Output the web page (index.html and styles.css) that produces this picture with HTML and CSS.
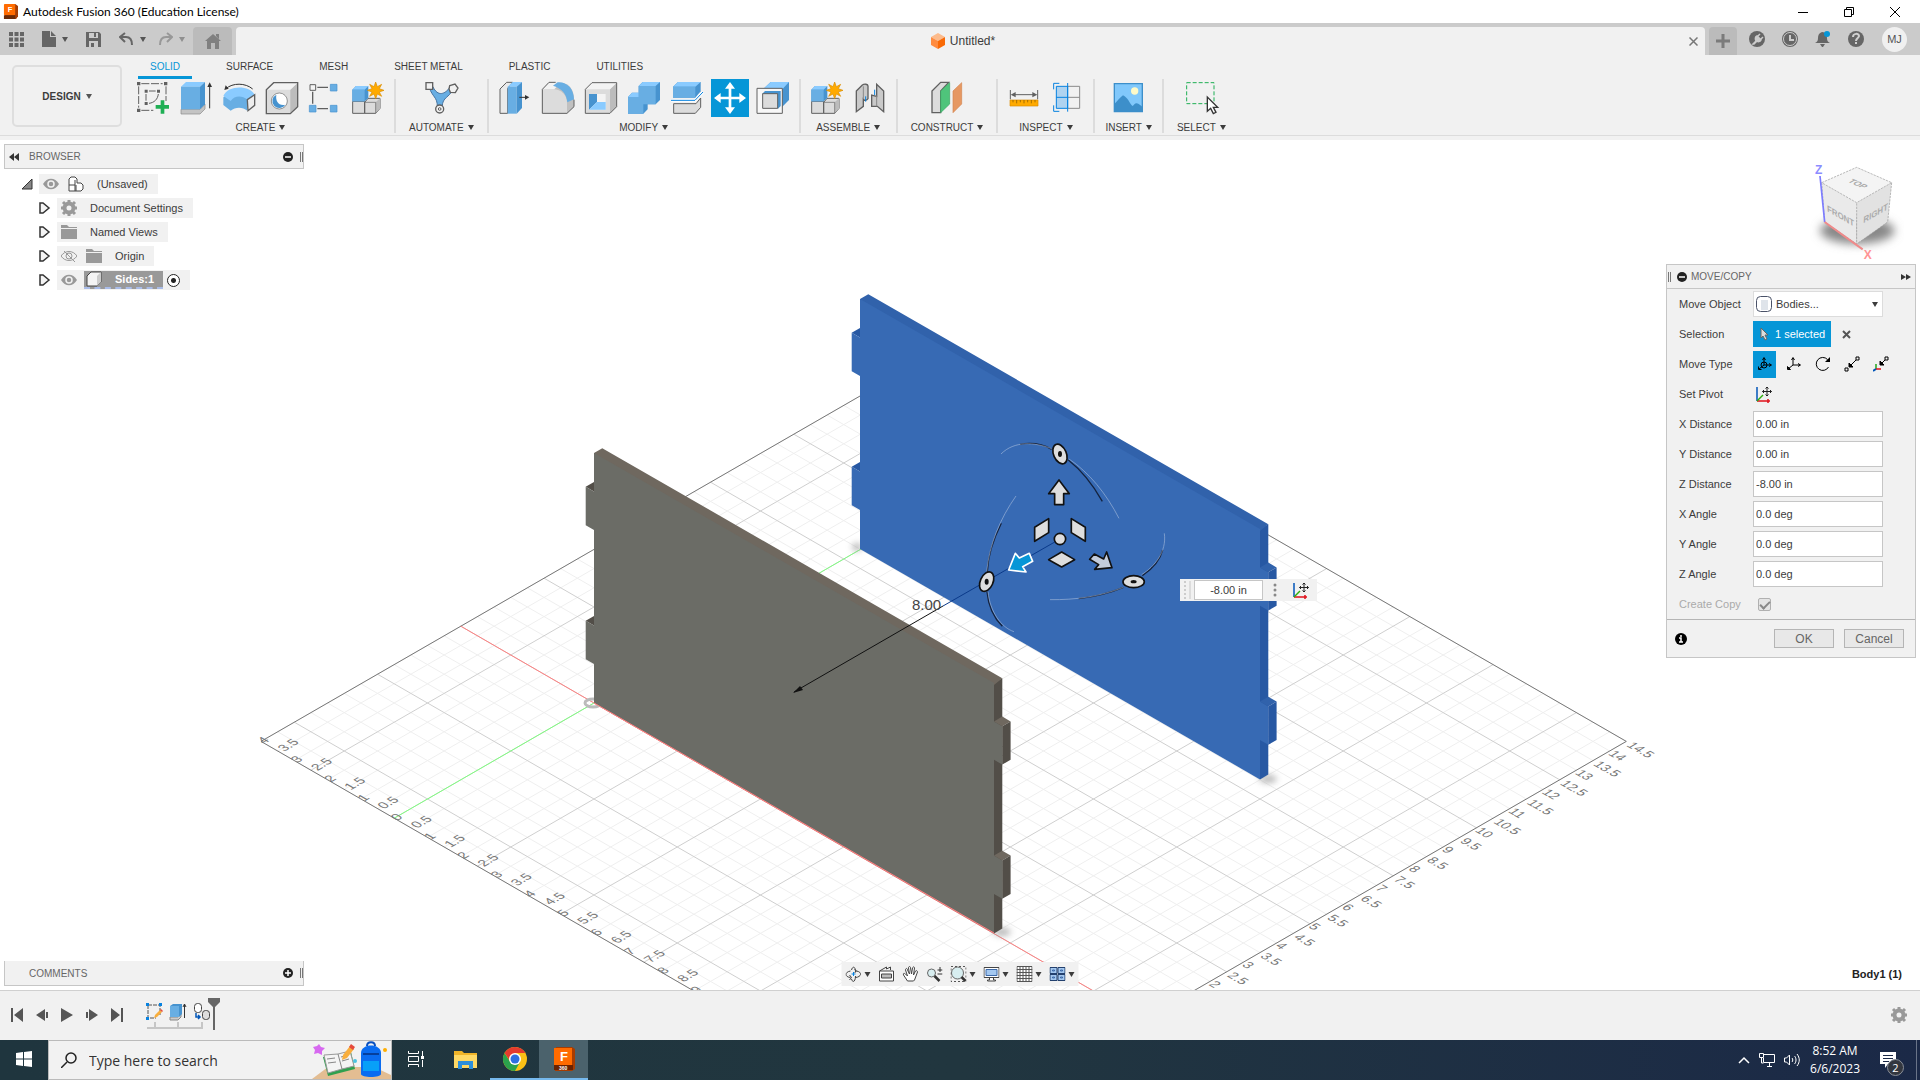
FILE: index.html
```
<!DOCTYPE html>
<html lang="en">
<head>
    <meta charset="UTF-8">
    <meta name="viewport" content="width=device-width,initial-scale=1">
    <title>Autodesk Fusion 360 (Education License)</title>
    <link rel="stylesheet" href="styles.css">
</head>
<body>
    <header class="titlebar">
        <svg class="app-logo" viewBox="0 0 16 18">
            <path d="M2 1h11l3 2v11l-2 3H2z" fill="#a33d05"/>
            <rect x="1" y="1" width="12" height="12" rx="1" fill="#ff6b00"/>
            <rect x="1" y="13" width="12" height="4" fill="#6b2a07"/>
            <text x="5" y="10" class="logo-letter">F</text>
        </svg>
        <span class="title">Autodesk Fusion 360 (Education License)</span>
        <div class="window-buttons">
            <button aria-label="Minimize"><svg viewBox="0 0 10 10"><path d="M0 5.500h10" stroke="#000"/></svg></button>
            <button aria-label="Restore"><svg viewBox="0 0 10 10" fill="none" stroke="#000"><path d="M.5 2.500h7v7h-7zM2.500 2.500v-2h7v7h-2"/></svg></button>
            <button aria-label="Close"><svg viewBox="0 0 10 10"><path d="M0 0l10 10M10 0L0 10" stroke="#000"/></svg></button>
        </div>
    </header>

    <nav class="tabbar">
        <div class="quick-access">
            <button class="qa" aria-label="Data panel"><svg width="15" height="15" viewBox="0 0 15 15" fill="#666"><path d="M0 0h4v4H0zM5.500 0h4v4h-4zM11 0h4v4h-4zM0 5.500h4v4H0zM5.500 5.500h4v4h-4zM11 5.500h4v4h-4zM0 11h4v4H0zM5.500 11h4v4h-4zM11 11h4v4h-4z"/></svg></button>
            <button class="qa" aria-label="File"><svg width="14" height="16" viewBox="0 0 14 16" fill="#666"><path d="M0 0h8v6h6v10H0zM9 0l5 5H9z"/></svg><i class="caret"></i></button>
            <button class="qa" aria-label="Save"><svg width="15" height="15" viewBox="0 0 15 15"><path d="M0 0h13l2 2v13H0z" fill="#666"/><path d="M3 1h9v5H3zM3 9h9v6H3z" fill="#ccc"/><path d="M8 1h2v4H8zM5 11h3v4H5z" fill="#666"/></svg></button>
            <button class="qa" aria-label="Undo"><svg width="15" height="14" viewBox="0 0 15 14" fill="none" stroke="#666" stroke-width="2"><path d="M6 1L1 5l5 5M1 5h6c4 0 6 2 6 8"/></svg><i class="caret"></i></button>
            <button class="qa dim" aria-label="Redo"><svg width="15" height="14" viewBox="0 0 15 14" fill="none" stroke="#666" stroke-width="2"><path d="M9 1l5 4-5 5M14 5H8c-4 0-6 2-6 8"/></svg><i class="caret"></i></button>
        </div>
        <button class="home" aria-label="Home"><svg width="16" height="15" viewBox="0 0 16 15" fill="#808080"><path d="M8 0l8 7h-2v8h-4V9H6v6H2V7H0zM11 0h3v5l-3-3z"/></svg></button>
        <div class="document-tab">
            <span class="document-name">
                <svg width="14" height="16" viewBox="0 0 14 16"><path d="M7 0l7 4-7 4-7-4z" fill="#fcbb8c"/><path d="M0 4l7 4v8l-7-4z" fill="#ff8c40"/><path d="M14 4L7 8v8l7-4z" fill="#f96a07"/></svg>
                Untitled*
            </span>
            <button class="close-tab" aria-label="Close document"><svg width="9" height="9" viewBox="0 0 9 9"><path d="M.5.5l8 8M8.500.5l-8 8" stroke="#777" stroke-width="1.500"/></svg></button>
        </div>
        <button class="new-tab" aria-label="New design"><svg width="14" height="14" viewBox="0 0 14 14"><path d="M7 0v14M0 7h14" stroke="#7b7b7b" stroke-width="3"/></svg></button>
        <div class="account">
            <button aria-label="Extensions"><svg viewBox="0 0 16 16"><circle cx="8" cy="8" r="8" fill="#666"/><path d="M4 13l3-3c-1-2-1-4 1-5l4 4c-1 2-3 2-4 1l-3 3zM9 5l2-2M12 8l2-2" fill="#ccc" stroke="#ccc" stroke-width="1.500"/></svg></button>
            <button aria-label="Job status"><svg viewBox="0 0 16 16"><circle cx="8" cy="8" r="7" fill="#666" stroke="#666" stroke-width="2"/><circle cx="8" cy="8" r="6.500" fill="none" stroke="#ccc"/><path d="M8 4v5h4" fill="none" stroke="#ccc" stroke-width="2"/></svg></button>
            <button aria-label="Notifications"><svg viewBox="0 0 16 16"><path d="M7 1c4 0 5 3 5 6s1 4 3 5H0c2-1 3-2 3-5s1-5 4-6zM5 13h5l-2 3H7z" fill="#666"/><circle cx="12" cy="3" r="3" fill="#0696d7"/></svg></button>
            <button aria-label="Help"><svg viewBox="0 0 16 16"><circle cx="8" cy="8" r="8" fill="#666"/><path d="M5 6c0-4 6-4 6-1 0 2-3 2-3 5M8 11v2" fill="none" stroke="#d0d0d0" stroke-width="2"/></svg></button>
            <button class="avatar">MJ</button>
        </div>
    </nav>

    <section class="ribbon">
        <button class="workspace">DESIGN <i class="caret"></i></button>
        <div class="ribbon-main">
            <div class="ribbon-tabs">
                <button class="active">SOLID</button>
                <button>SURFACE</button>
                <button>MESH</button>
                <button>SHEET METAL</button>
                <button>PLASTIC</button>
                <button>UTILITIES</button>
            </div>
            <div class="groups">
                <div class="group">
                    <div class="tools">
                        <button aria-label="Create sketch"><svg viewBox="0 0 114 114"><path d="M22 14h64M14 22v64M96 22v44M22 94h36" fill="none" stroke="#606060" stroke-width="3" stroke-dasharray="24 5"/><path d="M9 9h10v10H9zM90 9h10v10H90zM9 89h10v10H9zM32 32h9v9h-9zM69 32h9v9h-9zM32 69h9v9h-9z" fill="#606060"/><path d="M36 45v20M45 36h20M73 45c-2 16-12 26-28 28" fill="none" stroke="#606060" stroke-width="3"/><path d="M80 64h11v14h14v11H91v15H80V89H65V78h15z" fill="#1faf54"/></svg></button>
                        <button aria-label="Extrude"><svg viewBox="0 0 114 114"><path d="M12 91h57l15-15v14l-15 15H12z" fill="#c4c4c4" stroke="#888" stroke-width="2"/><path d="M12 23L27 9h57L69 23z" fill="#8acbff"/><path d="M12 23h57v68H12z" fill="#68aee3"/><path d="M69 23L84 9v67L69 91z" fill="#4793cf"/><path d="M98 88V22" stroke="#333" stroke-width="3"/><path d="M98 10l-7 14h14z" fill="#333"/></svg></button>
                        <button aria-label="Revolve"><svg viewBox="0 0 114 114"><path d="M10 55c24-18 56-18 74-4l-2 44c-14-12-36-12-50 0L10 78z" fill="#68aee3"/><path d="M10 51c14-33 78-33 94-4L82 62C66 49 44 49 32 66z" fill="#8acbff"/><path d="M82 62l22-15v32L84 95z" fill="#eee" stroke="#606060" stroke-width="4"/><path d="M18 29c20-18 58-18 80 1" fill="none" stroke="#333" stroke-width="3"/><path d="M13 33l4-14 9 10z" fill="#333"/></svg></button>
                        <button aria-label="Hole"><svg viewBox="0 0 114 114"><path d="M10 32l22-21h72v72l-22 21H10z" fill="#dcdcdc"/><path d="M82 32l22-21v72l-22 21z" fill="#bcbcbc"/><path d="M10 32l22-21h72L82 32z" fill="#f3f3f3"/><path d="M10 32l22-21h72v72l-22 21H10z" fill="none" stroke="#606060" stroke-width="4"/><circle cx="49" cy="66" r="24" fill="#fff" stroke="#606060" stroke-width="2"/><path d="M40 47a21 21 0 1 0 27 30c-20 4-30-10-27-30z" fill="#4793cf"/></svg></button>
                        <button aria-label="Pattern"><svg viewBox="0 0 114 114"><path d="M34 25h32M20 38v36M34 89h32" stroke="#606060" stroke-width="4"/><path d="M12 17h17v17H12z" fill="#f4f4f4" stroke="#606060" stroke-width="3"/><path d="M73 16h20v20H73zM73 79h20v20H73zM10 79h20v20H10z" fill="#68aee3" stroke="#4793cf" stroke-width="2"/></svg></button>
                        <button aria-label="Create form"><svg viewBox="0 0 114 114"><use href="#component"/></svg></button>
                    </div>
                    <button class="group-name">CREATE <i class="caret"></i></button>
                </div>
                <div class="group">
                    <div class="tools">
                        <button aria-label="Automated modeling"><svg viewBox="0 0 114 114"><path d="M22 26c9 28 24 28 24 56h15c0-28 22-26 30-50l-8-6C70 44 48 56 32 22z" fill="#68aee3" stroke="#4773a0" stroke-width="3"/><path d="M12 11h20v20H12zM83 20l16-5 9 12-8 14-15-1-4-10z" fill="#f1f1f1" stroke="#606060" stroke-width="4"/><circle cx="53" cy="90" r="12" fill="#f1f1f1" stroke="#606060" stroke-width="4"/><circle cx="53" cy="90" r="4" fill="none" stroke="#606060" stroke-width="3"/></svg></button>
                    </div>
                    <button class="group-name">AUTOMATE <i class="caret"></i></button>
                </div>
                <div class="group">
                    <div class="tools">
                        <button aria-label="Press pull"><svg viewBox="0 0 114 114"><path d="M12 30l20-20h18L35 28v75H12z" fill="#eaeaea" stroke="#606060" stroke-width="3"/><path d="M35 23L50 9h28L62 23z" fill="#8acbff"/><path d="M35 23h27v81H35z" fill="#68aee3"/><path d="M62 23L78 9v78l-16 17z" fill="#4793cf"/><path d="M70 55h20" stroke="#333" stroke-width="3"/><path d="M100 55l-13-7v14z" fill="#333"/></svg></button>
                        <button aria-label="Fillet"><svg viewBox="0 0 114 114"><path d="M10 103V31l20-20h34c28 2 41 22 41 50v22l-21 20z" fill="#c0c0c0"/><path d="M10 103V31h32c26 0 42 18 42 40v32z" fill="#dcdcdc"/><path d="M10 31l20-20h34L46 31z" fill="#f3f3f3"/><path d="M42 20l14-10c28-2 48 18 49 51L85 70C83 42 66 28 42 20z" fill="#68aee3"/><path d="M50 10H30L10 31v72h74l21-20V62" fill="none" stroke="#606060" stroke-width="3"/></svg></button>
                        <button aria-label="Shell"><svg viewBox="0 0 114 114"><path d="M10 31l20-20h74v72l-20 20H10z" fill="#dcdcdc"/><path d="M84 31l20-20v72l-20 20z" fill="#bcbcbc"/><path d="M10 31l20-20h74L84 31z" fill="#f3f3f3"/><path d="M10 31l20-20h74v72l-20 20H10z" fill="none" stroke="#606060" stroke-width="3"/><path d="M21 45h50v47H21z" fill="#f4f4f4"/><path d="M21 45h24v24L21 92z" fill="#4793cf"/><path d="M21 92l24-23h26v23z" fill="#8acbff"/></svg></button>
                        <button aria-label="Combine"><svg viewBox="0 0 114 114"><path d="M9 54l12-13h20V21L53 9h52v54L92 76H68v15l-13 13H9z" fill="#4793cf"/><path d="M9 54h32V21h51v55H55v28H9z" fill="#68aee3"/><path d="M9 54l12-13h20v13zM41 21L53 9h52L92 21z" fill="#8acbff"/></svg></button>
                        <button aria-label="Split body"><svg viewBox="0 0 114 114"><path d="M15 23L30 9h68v28L82 56H15z" fill="#4793cf"/><path d="M15 23L30 9h68L82 23z" fill="#8acbff"/><path d="M15 23h67v33H15z" fill="#68aee3"/><path d="M17 74h67l14-17v28l-16 18H17z" fill="#dcdcdc" stroke="#606060" stroke-width="3"/><path d="M9 64h72l24-25" fill="none" stroke="#fff" stroke-width="8"/><path d="M9 64h72l24-25" fill="none" stroke="#0782e0" stroke-width="3"/></svg></button>
                        <button class="selected" aria-label="Move/Copy"><svg viewBox="0 0 114 114"><path d="M57 24v66M24 57h66" stroke="#fff" stroke-width="8"/><path d="M57 9l15 20H42zM57 105L42 85h30zM9 57l20-15v30zM105 57L85 72V42z" fill="#fff"/></svg></button>
                        <button aria-label="Align"><svg viewBox="0 0 114 114"><path d="M27 31L50 9h55v54L82 86z" fill="#4793cf"/><path d="M27 31L50 9h55L85 31z" fill="#8acbff"/><path d="M9 28h76v75H9z" fill="#f8f8f8" stroke="#606060" stroke-width="3"/><path d="M25 44l8-8h47v45l-8 8z" fill="#4793cf"/><path d="M26 44h45v44H26z" fill="#dcdcdc" stroke="#606060" stroke-width="3"/></svg></button>
                    </div>
                    <button class="group-name">MODIFY <i class="caret"></i></button>
                </div>
                <div class="group">
                    <div class="tools">
                        <button aria-label="New component">
                            <svg viewBox="0 0 114 114">
                                <g id="component">
                                    <path d="M11 67h36v36H11zM47 70l10-12h36v30l-13 15H47z" fill="#dcdcdc" stroke="#606060" stroke-width="3"/>
                                    <path d="M80 70l13-12v30l-13 15z" fill="#bcbcbc"/>
                                    <path d="M47 70h33v33" fill="none" stroke="#606060" stroke-width="2"/>
                                    <path d="M10 32l11-11h37v36L47 67H10z" fill="#4793cf"/>
                                    <path d="M10 32l11-11h37L47 32z" fill="#8acbff"/>
                                    <path d="M10 32h37v35H10z" fill="#68aee3"/>
                                    <path d="M80 9l5 14 13-7-7 13 14 5-14 5 7 13-13-7-5 14-5-14-13 7 7-13-14-5 14-5-7-13 13 7z" fill="#ffaa00" stroke="#d98c00" stroke-width="2"/>
                                </g>
                            </svg>
                        </button>
                        <button aria-label="Joint"><svg viewBox="0 0 114 114"><path d="M16 36l18-18c6-4 17-3 17 3v38c-4 6-11 6-14 2v21L16 98z" fill="#c9c9c9" stroke="#606060" stroke-width="4"/><path d="M37 22v38" stroke="#888" stroke-width="3"/><path d="M98 98L79 82H62V48l15 4V16l21 20z" fill="#c9c9c9" stroke="#606060" stroke-width="4"/><path d="M77 50v32" stroke="#888" stroke-width="3"/><path d="M44 52v16M71 32v16" stroke="#0782e0" stroke-width="3"/></svg></button>
                    </div>
                    <button class="group-name">ASSEMBLE <i class="caret"></i></button>
                </div>
                <div class="group">
                    <div class="tools">
                        <button aria-label="Construct plane"><svg viewBox="0 0 114 114"><path d="M12 36l26-26h24L38 36v65H12z" fill="#dcdcdc" stroke="#606060" stroke-width="4"/><path d="M38 36l27-25v64l-27 26z" fill="#4fc47b" stroke="#39a762" stroke-width="2"/><path d="M75 36l26-25v64l-26 26z" fill="#e69862" stroke="#d48550" stroke-width="2"/></svg></button>
                    </div>
                    <button class="group-name">CONSTRUCT <i class="caret"></i></button>
                </div>
                <div class="group">
                    <div class="tools">
                        <button aria-label="Measure"><svg viewBox="0 0 114 114"><path d="M16 33v28M98 33v28M24 47h66" stroke="#606060" stroke-width="3"/><path d="M17 47l15-8v16zM97 47l-15-8v16z" fill="#606060"/><path d="M15 63h84v18H15z" fill="#ffaa00" stroke="#d98c00" stroke-width="2"/><path d="M24 63v7M35 63v10M46 63v7M57 63v10M68 63v7M79 63v10M90 63v7" stroke="#7a5200" stroke-width="2"/></svg></button>
                        <button aria-label="Section analysis"><svg viewBox="0 0 114 114"><path d="M59 22h36v66H59M59 55h36" fill="none" stroke="#8a8a8a" stroke-width="3"/><path d="M25 22h34v66H25z" fill="#afd3f0"/><path d="M25 22h34v66H25zM25 55h34M59 12v86M34 13H17v18M17 79v18h17" fill="none" stroke="#0782e0" stroke-width="3"/></svg></button>
                    </div>
                    <button class="group-name">INSPECT <i class="caret"></i></button>
                </div>
                <div class="group compact">
                    <div class="tools">
                        <button aria-label="Insert image"><svg viewBox="0 0 114 114"><path d="M13 14h84v84H13z" fill="#81c8fb" stroke="#3d8fca" stroke-width="4"/><circle cx="74" cy="36" r="11" fill="#fffac8"/><path d="M13 75c10-10 18-20 26-26 14 6 20 24 28 32 6-2 6-8 13-8 7 0 12 8 17 10v15H13z" fill="#3d8fca"/></svg></button>
                    </div>
                    <button class="group-name">INSERT <i class="caret"></i></button>
                </div>
                <div class="group">
                    <div class="tools">
                        <button aria-label="Select"><svg viewBox="0 0 114 114"><path d="M14 11h82v63H14z" fill="none" stroke="#1faf54" stroke-width="3" stroke-dasharray="12 6"/><path d="M76 54v43l10-9 8 16 8-4-8-15h13z" fill="#fff" stroke="#333" stroke-width="4"/></svg></button>
                    </div>
                    <button class="group-name">SELECT <i class="caret"></i></button>
                </div>
            </div>
        </div>
    </section>

    <main class="viewport">
        <svg class="scene" viewBox="0 140 1920 850" preserveAspectRatio="xMidYMid slice">
            <defs>
                <g id="board">
                    <path d="M400-20l8.300-4.800v250.400l-8.300 4.800z" fill="var(--side)"/>
                    <path d="M-8.300-216.200L0-221v9.600zM-8.300-82.200L0-87v9.600z" fill="var(--side)"/>
                    <path d="M0-250l8.300-4.800 400 230L400-18l-2 2L0-246z" fill="var(--top)"/>
                    <path d="M0-250L400-20V18.400l8.300 4.800v38.400L400 56.800v95.800l8.300 4.800v38.400L400 191v39.400L0 0v-39l-8.300-4.800v-38.400l8.300 4.800V-173l-8.300-4.800v-38.400l8.300 4.800z" fill="var(--face)"/>
                    <path d="M400 18.400l8.300-4.800 8.300 4.800-8.300 4.800zM400 152.600l8.300-4.800 8.300 4.800-8.300 4.800z" fill="var(--top)"/>
                    <path d="M408.300 23.200l8.300-4.800v38.400l-8.300 4.800zM408.300 157.400l8.300-4.800V191l-8.300 4.800z" fill="var(--side)"/>
                </g>
                <filter id="soft" x="-50%" y="-50%" width="200%" height="200%"><feGaussianBlur stdDeviation="3"/></filter>
                <filter id="soft-cube" x="-50%" y="-100%" width="200%" height="300%"><feGaussianBlur stdDeviation="14"/></filter>
            </defs>
            <g id="grid"></g>
            <g fill="#999" opacity=".7" filter="url(#soft)">
                <ellipse cx="1268" cy="779" rx="9" ry="4"/>
                <ellipse cx="1002" cy="932" rx="9" ry="4"/>
                <ellipse cx="857" cy="547" rx="5" ry="4"/>
            </g>
            <ellipse cx="593" cy="703" rx="8" ry="4" class="origin-ring"/>
            <use href="#board" x="860" y="549" class="board-blue"/>
            <use href="#board" x="594" y="703" class="board-gray"/>
            <path d="M594 703l400 230" class="axis-x"/>

            <path d="M1060 539L943 606" stroke="#0b3a8a"/>
            <path d="M943 606L794 692" stroke="#111"/>
            <path d="M793 693l10-3-3-4z" fill="#111"/>
            <text x="912" y="610" class="dimension">8.00</text>

            <!-- triad manipulator, drawn at 3x -->
            <g transform="translate(920 420) scale(.3333)" stroke-linejoin="round">
                <g fill="none" stroke="#14233f" stroke-width="4">
                    <path d="M300 73c34-6 66-2 95 15M445 120c46 36 76 78 102 124"/>
                    <path d="M244 310c-24 48-40 96-42 145M201 515c4 44 20 78 46 104"/>
                    <path d="M728 390c-8 32-30 56-61 77M610 502c-40 17-88 28-134 34"/>
                </g>
                <g fill="none" stroke="#c9d5e8" stroke-width="2" opacity=".7">
                    <path d="M243 102c40-40 100-36 152-16M447 117c60 40 112 104 150 178"/>
                    <path d="M288 228c-48 68-80 146-88 227M204 515c6 60 40 108 78 120"/>
                    <path d="M733 340c8 56-30 100-68 124M610 502c-70 28-144 38-220 37"/>
                </g>
                <g fill="#dedede" stroke="#111" stroke-width="5">
                    <ellipse cx="420" cy="102" rx="19" ry="31" transform="rotate(-24 420 102)"/>
                    <ellipse cx="200" cy="485" rx="19" ry="31" transform="rotate(24 200 485)"/>
                    <ellipse cx="641" cy="485" rx="32" ry="18"/>
                    <path d="M417 180l31 41h-17v33h-27v-33h-18z"/>
                    <path d="M344 322l42-26v42l-42 26zM454 296l42 26v42l-42-26zM386 419l39-23 39 23-39 22z"/>
                    <path d="M523 402l28 15 9-21 16 47-52 5 12-14-27-16z" fill="#c3ccdb"/>
                    <circle cx="420" cy="357" r="17"/>
                </g>
                <path d="M266 450l20-50 12 14 30-14 10 24-30 16 10 16z" fill="#0696d7" stroke="#fff" stroke-width="5"/>
                <g fill="#111"><ellipse cx="420" cy="102" rx="6" ry="9"/><ellipse cx="200" cy="485" rx="6" ry="9"/><ellipse cx="641" cy="485" rx="9" ry="5"/></g>
            </g>
        </svg>

        <svg class="viewcube" viewBox="510 480 282 309">
            <ellipse cx="652" cy="692" rx="112" ry="40" fill="#888" filter="url(#soft-cube)"/>
            <path d="M545 548l105-46 105 46-105 60z" fill="#f4f4f4"/>
            <path d="M545 548l105 60v124l-96-66z" fill="#eaeaea"/>
            <path d="M755 548l-105 60v124l93-66z" fill="#e2e2e2"/>
            <path d="M545 548l105-46 105 46-105 60zM545 548l9 118 96 66V608M755 548l-12 118-93 66" fill="none" stroke="#999" stroke-width="2" stroke-dasharray="7 3"/>
            <path d="M540 528l14 138" stroke="#7c7cff" stroke-width="5"/>
            <path d="M554 666l114 82" stroke="#f08a8a" stroke-width="6"/>
            <text x="525" y="522" class="cube-axis" fill="#8c8cff">Z</text>
            <text x="671" y="776" class="cube-axis" fill="#ff9494">X</text>
            <text transform="matrix(.87 .4 -.87 .5 622 545)" class="cube-face">TOP</text>
            <text transform="matrix(.87 .5 .05 1 562 634)" class="cube-face">FRONT</text>
            <text transform="matrix(.87 -.5 -.05 1 670 670)" class="cube-face">RIGHT</text>
        </svg>

        <aside class="browser">
            <div class="panel-head">
                <svg width="10" height="8" viewBox="0 0 10 8" fill="#333"><path d="M5 0v8L0 4zM10 0v8L5 4z"/></svg>
                <span>BROWSER</span>
                <button class="round" aria-label="Collapse browser"><svg viewBox="0 0 10 10"><circle cx="5" cy="5" r="5" fill="#222"/><path d="M2 5h6" stroke="#fff" stroke-width="1.500"/></svg></button>
                <i class="grip"></i>
            </div>
            <ul class="tree">
                <li class="root">
                    <svg class="arrow" viewBox="0 0 12 12"><path d="M11 1v10H1z" fill="#888" stroke="#333"/></svg>
                    <div class="node">
                        <svg viewBox="0 0 16 16"><use href="#eye"/></svg>
                        <svg viewBox="0 0 16 16"><path d="M1 15V3l2-2h4l2 2v4h4l2 2v4l-2 2zM1 9h6M7 15V4M8 9v6" fill="#fff" stroke="#444"/></svg>
                        <span>(Unsaved)</span>
                    </div>
                </li>
                <li>
                    <svg class="arrow" viewBox="0 0 12 12"><use href="#expand"/></svg>
                    <div class="node">
                        <svg viewBox="0 0 16 16"><use href="#gear"/></svg>
                        <span>Document Settings</span>
                    </div>
                </li>
                <li>
                    <svg class="arrow" viewBox="0 0 12 12"><use href="#expand"/></svg>
                    <div class="node">
                        <svg viewBox="0 0 16 16"><use href="#folder"/></svg>
                        <span>Named Views</span>
                    </div>
                </li>
                <li>
                    <svg class="arrow" viewBox="0 0 12 12"><use href="#expand"/></svg>
                    <div class="node">
                        <svg viewBox="0 0 16 16" fill="none" stroke="#999"><path d="M0 8c4-6 12-6 16 0-4 6-12 6-16 0zM3 3l11 11"/><circle cx="8" cy="8" r="3"/></svg>
                        <svg viewBox="0 0 16 16"><use href="#folder"/></svg>
                        <span>Origin</span>
                    </div>
                </li>
                <li>
                    <svg class="arrow" viewBox="0 0 12 12"><use href="#expand"/></svg>
                    <div class="node">
                        <svg viewBox="0 0 16 16"><use href="#eye"/></svg>
                        <div class="highlighted">
                            <svg viewBox="0 0 16 16"><path d="M1 5l4-4h10v10l-4 4H1z" fill="#f4f4f4" stroke="#444"/><path d="M11 5l4-4v10l-4 4z" fill="#ccc"/></svg>
                            <span>Sides:1</span>
                        </div>
                        <input type="radio" class="activate" aria-label="Activate Sides:1" checked>
                    </div>
                </li>
            </ul>
            <svg class="sprite" aria-hidden="true">
                <g id="eye"><path d="M0 8c4-7 12-7 16 0-4 7-12 7-16 0z" fill="#999"/><circle cx="8" cy="8" r="3" fill="#999" stroke="#f1f1f1" stroke-width="1.500"/></g>
                <g id="expand"><path d="M1 1h3l6 5-6 5H1z" fill="#f4f4f4" stroke="#333" stroke-width="1.500"/></g>
                <g id="folder"><path d="M0 1h6l2 2h8v1H0zM0 5h16v10H0z" fill="#999"/></g>
                <g id="gear"><circle cx="8" cy="8" r="4.500" fill="none" stroke="#999" stroke-width="4"/><path d="M8 0v3M8 13v3M0 8h3M13 8h3M2 2l2 2M12 12l2 2M14 2l-2 2M4 12l-2 2" stroke="#999" stroke-width="3"/></g>
                <g id="pivot"><path d="M2 1v14" stroke="#0055b8" stroke-width="1.500"/><path d="M2 15h13M13 13v4" stroke="#e0101a" stroke-width="1.500"/><path d="M2 15l6-6" stroke="#2fae0c" stroke-width="1.500"/><path d="M12 1v9M7.500 5.500h9M10.500 2.500L12 1l1.500 1.500M10.500 8.500L12 10l1.500-1.500M9 4L7.500 5.500 9 7M15 4l1.500 1.500L15 7" fill="none" stroke="#222"/></g>
            </svg>
        </aside>

        <form class="value-box">
            <i class="handle"></i>
            <input type="text" value="-8.00 in" aria-label="Distance">
            <button type="button" aria-label="More"><svg width="4" height="14" viewBox="0 0 4 14" fill="#888"><circle cx="2" cy="2" r="1.500"/><circle cx="2" cy="7" r="1.500"/><circle cx="2" cy="12" r="1.500"/></svg></button>
            <button type="button" aria-label="Set pivot"><svg width="17" height="17" viewBox="0 0 17 17"><use href="#pivot"/></svg></button>
        </form>

        <form class="move-panel">
            <div class="panel-head">
                <i class="grip"></i>
                <button type="button" class="round" aria-label="Collapse"><svg viewBox="0 0 10 10"><circle cx="5" cy="5" r="5" fill="#222"/><path d="M2 5h6" stroke="#fff" stroke-width="1.500"/></svg></button>
                <span>MOVE/COPY</span>
                <svg width="10" height="6" viewBox="0 0 10 6" fill="#333"><path d="M0 0v6l5-3zM5 0v6l5-3z"/></svg>
            </div>
            <div class="rows">
                <div class="row">
                    <label for="object">Move Object</label>
                    <div class="select-wrap">
                        <svg width="16" height="16" viewBox="0 0 16 16"><rect x=".5" y=".5" width="15" height="15" rx="4" fill="#fff" stroke="#4a5268"/><path d="M5 4h7v10H5z" fill="#dfe4ea"/></svg>
                        <select id="object"><option>Bodies...</option></select>
                        <i class="caret"></i>
                    </div>
                </div>
                <div class="row">
                    <label for="selection">Selection</label>
                    <button type="button" id="selection" class="selection"><svg width="10" height="14" viewBox="0 0 10 14"><path d="M1 1v10l2-2 2 4 2-1-2-4h3z" fill="#ddd" stroke="#666"/></svg>1 selected</button>
                    <button type="button" class="clear" aria-label="Clear selection"><svg width="9" height="9" viewBox="0 0 9 9"><path d="M1 1l7 7M8 1L1 8" stroke="#555" stroke-width="2"/></svg></button>
                </div>
                <div class="row">
                    <label for="free-move">Move Type</label>
                    <div class="move-types">
                        <button type="button" id="free-move" class="selected" aria-label="Free move"><svg viewBox="0 0 16 16"><path d="M7 2v7l-5 4M7 9h7M5.500 4L7 1.500 8.500 4M12 7.500L14.500 9 12 10.500M1.500 10.500v3h3" fill="none" stroke="#000"/><circle cx="7" cy="9" r="3" fill="none" stroke="#000"/></svg></button>
                        <button type="button" aria-label="Translate"><svg viewBox="0 0 16 16"><path d="M7 2v7l-5 4M7 9h7M5.500 4L7 1.500 8.500 4M12 7.500L14.500 9 12 10.500M1.500 10.500v3h3z" fill="none" stroke="#000"/></svg></button>
                        <button type="button" aria-label="Rotate"><svg viewBox="0 0 16 16"><path d="M13.500 11a6.500 6.500 0 1 1-1-7.500" fill="none" stroke="#000"/><path d="M15 1v5h-5z"/></svg></button>
                        <button type="button" aria-label="Point to point"><svg viewBox="0 0 16 16" fill="none" stroke="#000"><path d="M1 12h3v3H1zM12 1h3v3h-3zM12 4L6 10"/><path d="M5 7v4h4z" fill="#000"/></svg></button>
                        <button type="button" aria-label="Point to position"><svg viewBox="0 0 16 16" fill="none" stroke="#000"><path d="M12 1h3v3h-3zM12 4L8 8"/><path d="M7 5v4h4z" fill="#000"/><path d="M3 8v5" stroke="#22a51a" stroke-width="1.500"/><path d="M3 13h5" stroke="#e0101a" stroke-width="1.500"/><path d="M0 15l3-2" stroke="#0055b8" stroke-width="2"/></svg></button>
                    </div>
                </div>
                <div class="row">
                    <label for="set-pivot">Set Pivot</label>
                    <button type="button" id="set-pivot" class="pivot"><svg width="17" height="17" viewBox="0 0 17 17"><use href="#pivot"/></svg></button>
                </div>
                <div class="row"><label for="xd">X Distance</label><input type="text" id="xd" value="0.00 in"></div>
                <div class="row"><label for="yd">Y Distance</label><input type="text" id="yd" value="0.00 in"></div>
                <div class="row"><label for="zd">Z Distance</label><input type="text" id="zd" value="-8.00 in"></div>
                <div class="row"><label for="xa">X Angle</label><input type="text" id="xa" value="0.0 deg"></div>
                <div class="row"><label for="ya">Y Angle</label><input type="text" id="ya" value="0.0 deg"></div>
                <div class="row"><label for="za">Z Angle</label><input type="text" id="za" value="0.0 deg"></div>
                <div class="row disabled"><label for="copy">Create Copy</label><input type="checkbox" id="copy" checked disabled></div>
            </div>
            <div class="panel-foot">
                <svg width="12" height="12" viewBox="0 0 12 12"><circle cx="6" cy="6" r="6"/><path d="M6 2v2M4 5h2v4M4 9h4" fill="none" stroke="#fff" stroke-width="1.500"/></svg>
                <button type="button">OK</button>
                <button type="button">Cancel</button>
            </div>
        </form>

        <div class="comments">
            <div class="panel-head">
                <span>COMMENTS</span>
                <button class="round" aria-label="Expand comments"><svg viewBox="0 0 10 10"><circle cx="5" cy="5" r="5" fill="#222"/><path d="M2 5h6M5 2v6" stroke="#fff" stroke-width="1.500"/></svg></button>
                <i class="grip"></i>
            </div>
        </div>

        <div class="navbar">
            <button aria-label="Orbit"><svg viewBox="0 0 16 16" fill="none" stroke="#444"><path d="M6 4c1-4 4-4 4 2M10 10c0 6-3 7-4 3"/><path d="M5 5C-1 6-1 11 5 11.500M11 5c6 1 5 6-1 6.500"/><path d="M4 9l2 2.500L4 14M9 3l2 2-2 2"/><path d="M8 6v4M6 8h4" stroke="#0782e0"/></svg><i class="caret"></i></button>
            <button aria-label="Look at"><svg viewBox="0 0 16 16" fill="#fff" stroke="#444"><path d="M1 5h14v10H1z"/><path d="M3 8h10v4H3z" fill="#bbb"/><path d="M1 5l7-4v2l4-2v3" fill="none"/></svg></button>
            <button aria-label="Pan"><svg viewBox="0 0 16 16"><path d="M5 15L1 9c-1-2 1-2 2-1l2 2-2-6c0-2 2-2 2 0l2 4-1-6c0-2 2-2 2 0l1 6 1-6c1-2 2-1 2 0l-1 7 2-4c1-1 2 0 2 1l-3 8-1 1z" fill="#fff" stroke="#444"/></svg></button>
            <button aria-label="Zoom"><svg viewBox="0 0 16 16"><circle cx="5" cy="7" r="4" fill="#d8eef0" stroke="#666"/><path d="M8 10l5 5" stroke="#333" stroke-width="2.500"/><path d="M11 4h5M13.500 1v5M11 8h5" stroke="#333"/></svg></button>
            <button aria-label="Fit"><svg viewBox="0 0 16 16"><path d="M.5.500h15v15H.5z" fill="none" stroke="#555" stroke-dasharray="2 2"/><circle cx="7" cy="7" r="6" fill="#d8eef0" stroke="#666"/><path d="M11 11l4 4" stroke="#333" stroke-width="2.500"/></svg><i class="caret"></i></button>
            <button aria-label="Display settings"><svg viewBox="0 0 16 16"><path d="M.5 1.500h15v10H.5z" fill="#fff" stroke="#444"/><path d="M2.500 3.500h11v6h-11z" fill="#a4c8f0" stroke="#3c69a8"/><path d="M6 12v2H4v1h8v-1h-2v-2" fill="#fff" stroke="#444"/></svg><i class="caret"></i></button>
            <button aria-label="Grid and snaps"><svg viewBox="0 0 16 16"><path d="M.5.500h15v15H.5zM3.500 0v16M6.500 0v16M9.500 0v16M12.500 0v16M0 3.500h16M0 6.500h16M0 9.500h16M0 12.500h16" fill="#fff" stroke="#555"/></svg><i class="caret"></i></button>
            <button aria-label="Viewports"><svg viewBox="0 0 16 16"><path d="M.5 1.500h7v6h-7zM8.500 1.500h7v6h-7zM.5 8.500h7v6h-7zM8.500 8.500h7v6h-7z" fill="#a4c8f0" stroke="#23406e"/><path d="M3 4h2v1H3zM11 4h2v1h-2zM3 11h2v1H3zM11 11h2v1h-2z" fill="none" stroke="#3c69a8"/></svg><i class="caret"></i></button>
        </div>
        <span class="status">Body1 (1)</span>
    </main>

    <section class="timeline">
        <div class="playback">
            <button aria-label="Go to start"><svg viewBox="0 0 14 14"><path d="M1 0h2v14H1zM13 0v14L4 7z"/></svg></button>
            <button aria-label="Step back"><svg viewBox="0 0 14 14"><path d="M10 1v12L1 7zM11 4h2v6h-2z"/></svg></button>
            <button aria-label="Play"><svg viewBox="0 0 14 14"><path d="M1 0v14l12-7z"/></svg></button>
            <button aria-label="Step forward"><svg viewBox="0 0 14 14"><path d="M4 1v12l9-6zM1 4h2v6H1z"/></svg></button>
            <button aria-label="Go to end"><svg viewBox="0 0 14 14"><path d="M11 0h2v14h-2zM1 0v14l9-7z"/></svg></button>
        </div>
        <svg class="features" viewBox="0 0 74 34">
            <path d="M1 30h56M9 24v6M32 24v6M56 24v6" fill="none" stroke="#c6c6c6" stroke-width="2"/>
            <path d="M2 7h12v10M2 7v13h8" fill="none" stroke="#555" stroke-dasharray="4 1"/>
            <path d="M0 5h3v3H0zM13 5h3v3h-3zM0 19h3v3H0z" fill="#0782e0"/>
            <path d="M8 20l1-3 5-5 2 2-5 5z" fill="#f8ae3d"/><path d="M14 12l1-1 2 2-1 1z" fill="#e64a3c"/>
            <path d="M24 19h8l3-3v3l-3 3h-8z" fill="#ccc" stroke="#888"/><path d="M24 8l3-2h9v10l-3 3h-9z" fill="#4793cf"/><path d="M24 8h9v11h-9z" fill="#68aee3"/><path d="M38.500 20V6M37 9l1.500-3L40 9" fill="none" stroke="#333"/>
            <rect x="48.500" y="5.500" width="7" height="9" rx="3" fill="#fff" stroke="#444"/><rect x="56.500" y="12.500" width="7" height="9" rx="3" fill="#ddd" stroke="#444"/>
            <path d="M50 15v4h4M52 17l2 2-2 2" fill="none" stroke="#0055b8" stroke-width="1.500"/>
            <path d="M62 0h12v4l-5 5v23h-2V9l-5-5z" fill="#666"/>
        </svg>
        <button class="settings" aria-label="Timeline settings"><svg viewBox="0 0 16 16"><use href="#gear"/></svg></button>
    </section>

    <footer class="taskbar">
        <button class="start" aria-label="Start"><svg width="16" height="16" viewBox="0 0 16 16" fill="#fff"><path d="M0 2l7-1v6.500H0zM8 1l8-1v7.500H8zM0 8.500h7V15l-7-1zM8 8.500h8V16l-8-1z"/></svg></button>
        <div class="search">
            <svg width="16" height="16" viewBox="0 0 16 16" fill="none" stroke="#222" stroke-width="1.500"><circle cx="10" cy="6" r="5"/><path d="M6 10l-6 6"/></svg>
            <input type="text" placeholder="Type here to search" aria-label="Type here to search">
            <svg class="search-art" width="79" height="38" viewBox="0 0 79 38">
                <path d="M0 38l16-12h46l17 8v4z" fill="#e3bd92"/>
                <path d="M7 3l2 3 4 1-3 3v4l-4-2-4 1 1-4-2-3 4-1z" fill="#d769f0"/>
                <path d="M11 16l28-5 4 17-27 7z" fill="#2fa04e"/><path d="M12 14l14-1 12-3 4 15-12 3-14 4z" fill="#f4f4f4" stroke="#999"/><path d="M26 13l4 15M15 18l8-1M16 22l8-1M29 16l7-2M30 20l7-2" stroke="#888"/>
                <path d="M30 19l1-5 7-9 4 3-7 9z" fill="#f8ae3d"/><path d="M37 6l2-3 4 3-2 3z" fill="#e64a3c"/>
                <path d="M49 12c0-10 20-10 20 0v21c0 4-20 4-20 0z" fill="#0a6cf0"/><path d="M55 5c0-5 8-5 8 0" fill="none" stroke="#0850c0" stroke-width="2"/><path d="M51 20h16v10H51z" fill="#08a0f8"/><path d="M51 13h16" stroke="#063f9c" stroke-width="2"/>
                <circle cx="73" cy="9" r="2" fill="#ffae00"/><circle cx="43" cy="20" r="2" fill="#4cc3e0"/>
            </svg>
        </div>
        <button class="task" aria-label="Task view"><svg width="17" height="16" viewBox="0 0 17 16" fill="none" stroke="#fff"><path d="M.5 0v2.500h10V0M.5 5.500h10v5H.5zM.5 16v-2.500h10V16M14.500 0v5M14.500 9v7"/><path d="M13 5h3v3h-3z" fill="#fff" stroke="none"/></svg></button>
        <button class="task" aria-label="File Explorer"><svg width="23" height="19" viewBox="0 0 23 19"><path d="M0 1h8l2 2h13v15H0z" fill="#f0b429"/><path d="M0 5h23v13H0z" fill="#ffd966"/><path d="M4 19v-8h15v8h-4v-4H8v4z" fill="#2d8fdb"/></svg></button>
        <button class="task running" aria-label="Google Chrome"><svg width="26" height="26" viewBox="0 0 26 26"><circle cx="13" cy="13" r="12" fill="#fbc116"/><path d="M2.600 7A12 12 0 0 0 13 25l5-9-9 1z" fill="#2ba24c"/><path d="M2.600 7a12 12 0 0 1 20.800 0H13l-5 8z" fill="#e33b2e"/><circle cx="13" cy="13" r="6" fill="#fff"/><circle cx="13" cy="13" r="4.500" fill="#2d6fe0"/></svg></button>
        <button class="task current" aria-label="Fusion 360"><svg width="22" height="24" viewBox="0 0 22 24"><path d="M3 0h16l3 2v20l-3 2H2z" fill="#a83c00"/><path d="M1 1h18v17H1z" fill="#ff6b00"/><path d="M1 18h19v5H1z" fill="#6b2200"/><text x="7" y="14" class="task-letter">F</text><text x="6" y="23" class="task-number">360</text></svg></button>
        <div class="tray">
            <button aria-label="Hidden icons"><svg width="12" height="8" viewBox="0 0 12 8"><path d="M1 7l5-5 5 5" fill="none" stroke="#fff" stroke-width="1.500"/></svg></button>
            <button aria-label="Network"><svg width="16" height="14" viewBox="0 0 16 14" fill="none" stroke="#fff"><path d="M5 1.500h10.500v8H4.500V5M8 13.500h5M10.500 10v3M.5.500h4v4h-4zM2.500 5v5h2"/></svg></button>
            <button aria-label="Volume"><svg width="16" height="14" viewBox="0 0 16 14" fill="none" stroke="#fff"><path d="M.5 5h2l3-3v10l-3-3h-2zM8 5c1 1 1 3 0 4M10.500 3c2 2 2 6 0 8M13 1c3 4 3 8 0 12"/></svg></button>
            <time class="clock"><span>8:52 AM</span><span>6/6/2023</span></time>
            <button class="notifications" aria-label="2 notifications"><svg width="16" height="16" viewBox="0 0 16 16"><path d="M0 0h16v12H8l-3 4v-4H0z" fill="#fff"/><path d="M3 3.500h10M3 6.500h10M3 9.500h6" stroke="#1b2947"/></svg><span class="badge">2</span></button>
        </div>
    </footer>
    <script src="script.js"></script>
</body>
</html>
```
FILE: styles.css
```
* {
    margin: 0;
    padding: 0;
    box-sizing: border-box;
}

body {
    display: flex;
    flex-direction: column;
    height: 100vh;
    overflow: hidden;
    background-color: #fff;
    color: #3c3c3c;
    font-family: 'Liberation Sans', Arial, sans-serif;
    font-size: 11px;
}

button {
    border: none;
    background: none;
    font: inherit;
    color: inherit;
}

svg {
    display: block;
    flex-shrink: 0;
}

button,
input,
select {
    outline: none;
}

.caret {
    width: 0;
    height: 0;
    border: 3px solid transparent;
    border-top: 5px solid #3c3c3c;
    border-bottom: none;
}

/* title bar */
.titlebar {
    display: flex;
    align-items: center;
    height: 23px;
    padding-left: 3px;
    color: #000;
    font-family: Lato, sans-serif;
    font-size: 12px;
}

.app-logo {
    width: 15px;
    height: 17px;
    margin-right: 5px;
}

.logo-letter {
    fill: #fff;
    font: bold 8px 'Liberation Sans', sans-serif;
}

.window-buttons {
    display: flex;
    margin-left: auto;
    padding-right: 2px;
}

.window-buttons button {
    display: flex;
    justify-content: center;
    align-items: center;
    width: 46px;
    height: 20px;
}

.window-buttons svg {
    width: 10px;
    height: 10px;
}

/* document tabs */
.tabbar {
    display: flex;
    align-items: flex-end;
    height: 32px;
    background-color: #cbcbcb;
}

.quick-access {
    display: flex;
    align-items: center;
    gap: 18px;
    width: 193px;
    height: 32px;
    padding-left: 9px;
}

.qa {
    display: flex;
    align-items: center;
    gap: 6px;
}

.qa .caret,
.workspace .caret {
    border-top-color: #555;
}

.dim {
    margin-left: -6px;
    opacity: 0.5;
}

.home,
.new-tab {
    display: flex;
    justify-content: center;
    align-items: center;
    width: 39px;
    height: 28px;
    background-color: #bbb;
    border-radius: 4px 4px 0 0;
}

.document-tab {
    display: flex;
    align-items: center;
    flex: 1;
    height: 28px;
    margin: 0 4px;
    background-color: #f1f1f1;
    border-radius: 4px 4px 0 0;
}

.document-name {
    display: flex;
    align-items: center;
    justify-content: center;
    gap: 5px;
    flex: 1;
    padding-left: 8px;
    font-size: 12px;
}

.close-tab {
    padding: 7px;
}

.new-tab {
    width: 28px;
}

.account {
    display: flex;
    align-items: center;
    gap: 17px;
    height: 32px;
    padding: 0 13px 0 12px;
}

.account svg {
    width: 16px;
    height: 16px;
}

.avatar {
    width: 25px;
    height: 25px;
    margin-left: 1px;
    border-radius: 50%;
    background-color: #f0f0f0;
    color: #555;
}

/* ribbon */
.ribbon {
    display: flex;
    height: 85px;
    background-color: #f1f1f1;
    border-bottom: 4px solid #f1f1f1;
    box-shadow: inset 0 -1px #dcdcdc;
}

.workspace {
    display: flex;
    justify-content: center;
    align-items: center;
    gap: 5px;
    width: 110px;
    height: 62px;
    margin: 10px 5px 0 12px;
    border: 2px solid #dedede;
    border-radius: 5px;
    font-size: 10px;
    font-weight: bold;
}

.ribbon-tabs {
    display: flex;
    gap: 22px;
    height: 24px;
    padding-left: 11px;
}

.ribbon-tabs button {
    padding: 2px 12px 0;
    border-bottom: 3px solid transparent;
    font-size: 10px;
}

.ribbon-tabs .active {
    color: #0696d7;
    border-bottom-color: #0696d7;
}

.groups {
    display: flex;
}

.group {
    display: flex;
    flex-direction: column;
    align-items: center;
    height: 54px;
    border-right: 2px solid #dcdcdc;
}

.group:last-child {
    border-right: none;
}

.tools {
    display: flex;
    gap: 5px;
    padding: 0 7px;
}

.tools svg {
    width: 38px;
    height: 38px;
}

.tools .selected {
    background-color: #0696d7;
}

.group-name {
    display: flex;
    align-items: center;
    gap: 4px;
    padding: 5px 13px 0;
    font-size: 10px;
}

.compact .group-name {
    padding: 5px 10px 0;
}

/* viewport */
.viewport {
    position: relative;
    flex: 1;
    min-height: 0;
    overflow: hidden;
}

.scene {
    width: 100%;
    height: 100%;
}

.minor {
    stroke: #efefef;
}

.major {
    stroke: #cfcfcf;
}

.edge {
    stroke: #777;
}

.axis-x {
    stroke: #ff8080;
}

.axis-y {
    stroke: #80ff80;
}

.tick {
    fill: #777;
    font: 13px 'Liberation Sans', sans-serif;
    dominant-baseline: central;
}

.dimension {
    fill: #444;
    font: 15px 'Liberation Sans', sans-serif;
}

.origin-ring {
    fill: none;
    stroke: #bbb;
    stroke-width: 3px;
}

.board-blue {
    --face: #376ab4;
    --top: #3162ab;
    --side: #2758a3;
}

.board-gray {
    --face: #6b6c66;
    --top: #6f685f;
    --side: #524e48;
}

.viewcube {
    position: absolute;
    top: 20px;
    right: 16px;
    width: 94px;
    height: 103px;
}

.cube-axis {
    font: bold 36px 'Liberation Sans', sans-serif;
}

.cube-face {
    fill: #aaa;
    font: bold 27px 'Liberation Sans', sans-serif;
}

.panel-head {
    display: flex;
    align-items: center;
    height: 24px;
    color: #666;
    font-size: 10px;
}

.round svg {
    width: 10px;
    height: 10px;
}

.grip {
    width: 3px;
    height: 10px;
    border: solid #777;
    border-width: 0 1px;
}

.browser {
    position: absolute;
    top: 4px;
    left: 4px;
    width: 300px;
}

.browser .panel-head,
.comments {
    background-color: #f1f1f1;
    border: 1px solid #c6c6c6;
}

.browser .panel-head {
    height: 25px;
    padding-left: 4px;
    gap: 10px;
}

.browser .round,
.comments .round {
    margin-left: auto;
}

.browser .grip {
    margin-left: -3px;
}

.comments .grip {
    margin-left: 7px;
}

.tree {
    display: flex;
    flex-direction: column;
    gap: 4px;
    padding-top: 5px;
    list-style: none;
}

.tree li {
    display: flex;
    align-items: center;
    gap: 6px;
    height: 20px;
    padding-left: 35px;
}

.tree .root {
    padding-left: 17px;
}

.arrow {
    width: 12px;
    height: 12px;
}

.node {
    display: flex;
    align-items: center;
    gap: 9px;
    height: 20px;
    padding: 0 10px 0 4px;
    background-color: #f1f1f1;
}

.node svg {
    width: 16px;
    height: 16px;
}

.node span {
    padding-left: 4px;
}

.highlighted {
    display: flex;
    align-items: center;
    gap: 9px;
    height: 18px;
    margin: 0 -5px 0 -2px;
    padding: 0 9px 0 2px;
    background-color: #999;
    border-bottom: 2px dashed #a9bce8;
    color: #fff;
    font-weight: bold;
}

.activate {
    appearance: none;
    width: 13px;
    height: 13px;
    border: 1px solid #222;
    border-radius: 50%;
    background: radial-gradient(#222 0 2px, #fff 3px);
}

.sprite {
    position: absolute;
    width: 0;
    height: 0;
}

/* floating value input */
.value-box {
    position: absolute;
    top: 439px;
    left: calc(50% + 220px);
    display: flex;
    align-items: center;
    height: 22px;
    padding-right: 8px;
    background-color: #f1f1f1;
}

.handle {
    width: 7px;
    height: 18px;
    margin: 0 3px 0 4px;
    border-right: 2px solid #dcdcdc;
    border-left: 2px dotted #ccc;
}

.value-box input {
    width: 69px;
    height: 20px;
    border: 1px solid #c6c6c6;
    color: #3c3c3c;
    font: inherit;
    text-align: center;
}

.value-box button {
    margin-left: 10px;
}

.value-box button + button {
    margin-left: 15px;
}

/* move/copy dialog */
.move-panel {
    position: absolute;
    top: 124px;
    right: 4px;
    width: 250px;
    background-color: #f1f1f1;
    border: 1px solid #c6c6c6;
}

.move-panel .panel-head {
    gap: 4px;
    padding: 0 4px 0 1px;
    border-bottom: 1px solid #c6c6c6;
}

.move-panel .round {
    margin-left: 2px;
}

.move-panel .panel-head > svg {
    margin-left: auto;
}

.row {
    display: flex;
    align-items: center;
    height: 30px;
    padding-left: 12px;
}

.row label {
    width: 74px;
}

.row input[type="text"],
.select-wrap {
    width: 130px;
    height: 26px;
    padding-left: 2px;
    background-color: #fff;
    border: 1px solid #c6c6c6;
    color: #3c3c3c;
    font: inherit;
}

.select-wrap {
    display: flex;
    align-items: center;
    gap: 4px;
    padding-right: 4px;
    border-color: #dcdcdc;
}

.select-wrap select {
    flex: 1;
    appearance: none;
    border: none;
    background: none;
    color: #3c3c3c;
    font: inherit;
}

.selection {
    display: flex;
    align-items: center;
    gap: 5px;
    height: 26px;
    padding: 0 6px 0 7px;
    background-color: #0696d7;
    color: #fff;
}

.clear {
    margin-left: 11px;
}

.move-types {
    display: flex;
    gap: 6px;
}

.move-types button {
    display: flex;
    justify-content: center;
    align-items: center;
    width: 23px;
    height: 27px;
}

.move-types svg {
    width: 16px;
    height: 16px;
}

.move-types .selected {
    background-color: #0696d7;
}

.pivot {
    padding-left: 2px;
}

.disabled label {
    color: #aaa;
}

.row input[type="checkbox"] {
    appearance: none;
    width: 13px;
    height: 13px;
    margin-left: 5px;
    border: 1px solid #b0b0b0;
    border-radius: 2px;
    background-color: #e4e4e4;
}

.row input[type="checkbox"]:checked::before {
    content: '';
    display: block;
    width: 4px;
    height: 8px;
    margin: 0 auto;
    border: solid #888;
    border-width: 0 2px 2px 0;
    transform: rotate(45deg);
}

.panel-foot {
    display: flex;
    align-items: center;
    gap: 10px;
    height: 38px;
    padding: 0 11px 0 8px;
    border-top: 1px solid #b5b5b5;
}

.panel-foot svg {
    margin-right: auto;
}

.panel-foot button {
    width: 60px;
    height: 19px;
    border: 1px solid #b5b5b5;
    background-color: #e8e8e8;
    color: #666;
    font-size: 12px;
}

/* bottom of the viewport */
.comments {
    position: absolute;
    bottom: 4px;
    left: 4px;
    width: 300px;
    border-top: none;
}

.comments .panel-head {
    padding-left: 24px;
}

.navbar {
    position: absolute;
    bottom: 4px;
    left: 50%;
    display: flex;
    align-items: center;
    gap: 8px;
    height: 24px;
    padding: 0 4px;
    background-color: #f1f1f1;
    transform: translateX(-50%);
}

.navbar button {
    display: flex;
    align-items: center;
    gap: 3px;
}

.navbar svg {
    width: 16px;
    height: 16px;
}

.status {
    position: absolute;
    right: 18px;
    bottom: 10px;
    color: #222;
    font-weight: bold;
}

/* timeline */
.timeline {
    display: flex;
    align-items: center;
    height: 50px;
    padding: 0 13px 2px 10px;
    background-color: #f1f1f1;
    border-top: 1px solid #d0d0d0;
}

.playback {
    display: flex;
    gap: 11px;
}

.playback svg {
    width: 14px;
    height: 14px;
    fill: #555;
}

.features {
    width: 74px;
    height: 34px;
    margin-left: 22px;
}

.settings {
    margin-left: auto;
}

.settings svg {
    width: 16px;
    height: 16px;
}

/* taskbar */
.taskbar {
    display: flex;
    height: 40px;
    background: linear-gradient(90deg, #1f353e, #21363f 50%, #1b2947);
    color: #fff;
    font-family: 'Open Sans', sans-serif;
    font-size: 12px;
}

.start,
.task {
    display: flex;
    justify-content: center;
    align-items: center;
    width: 48px;
    border-bottom: 2px solid transparent;
}

.search {
    display: flex;
    align-items: center;
    width: 344px;
    padding-left: 12px;
    background-color: #f2f2f2;
    border: 1px solid #bbb;
}

.search input {
    flex: 1;
    min-width: 0;
    padding-left: 12px;
    border: none;
    background: none;
    font: 14px 'Open Sans', sans-serif;
}

.search input::placeholder {
    color: #333;
}

.task {
    width: 49px;
}

.task.running,
.task.current {
    border-bottom-color: #76b9ed;
}

.task.current {
    background-color: #4b626c;
}

.task-letter {
    fill: #fff;
    font: bold 13px 'Liberation Sans', sans-serif;
}

.task-number {
    fill: #fff;
    font: bold 5px 'Liberation Sans', sans-serif;
}

.tray {
    display: flex;
    align-items: center;
    gap: 9px;
    margin-left: auto;
    padding-right: 3px;
}

.clock {
    display: flex;
    flex-direction: column;
    align-items: center;
    line-height: 18px;
    margin: 0 2px 0 1px;
}

.notifications {
    position: relative;
    height: 40px;
    padding: 0 20px 0 9px;
    border-right: 1px solid #6a7488;
}

.badge {
    position: absolute;
    right: 12px;
    bottom: 4px;
    width: 17px;
    height: 17px;
    border: 1px solid #8a8f99;
    border-radius: 50%;
    background-color: #33373f;
    color: #fff;
    font-size: 11px;
    line-height: 15px;
    text-align: center;
}
```
FILE: script.js
```
// ground plane: u runs down-right, v runs up-right, one unit is an inch
const ORIGIN = { x: 594, y: 703 };
const STEP = { x: 33.3, y: 19.2 };
const U = [-4, 16.5];
const V = [-6, 14.5];

const grid = document.getElementById('grid');

function project(u, v) {
    return [ORIGIN.x + (u + v) * STEP.x, ORIGIN.y + (u - v) * STEP.y];
}

function addLine(from, to, className) {
    const path = document.createElementNS('http://www.w3.org/2000/svg', 'path');
    path.setAttribute('d', `M${project(...from)}L${project(...to)}`);
    path.setAttribute('class', className);
    grid.appendChild(path);
}

function addLabel(point, value, matrix, anchor) {
    const text = document.createElementNS('http://www.w3.org/2000/svg', 'text');
    text.setAttribute('transform', `matrix(${matrix} ${point})`);
    text.setAttribute('class', 'tick');
    text.setAttribute('x', anchor);
    text.textContent = value;
    grid.appendChild(text);
}

function drawLines(major) {
    const className = major ? 'major' : 'minor';
    for (let u = U[0]; u <= U[1]; u += 0.5) {
        if ((u % 2.5 === 0) === major) addLine([u, V[0]], [u, V[1]], className);
    }
    for (let v = V[0]; v <= V[1]; v += 0.5) {
        if ((v % 2.5 === 0) === major) addLine([U[0], v], [U[1], v], className);
    }
}

drawLines(false);
drawLines(true);

addLine([U[0], V[0]], [U[1], V[0]], 'edge');
addLine([U[0], V[0]], [U[0], V[1]], 'edge');
addLine([U[1], V[0]], [U[1], V[1]], 'edge');
addLine([U[0], V[1]], [U[1], V[1]], 'edge');
addLine([U[0], 0], [U[1], 0], 'axis-x');
addLine([0, V[0]], [0, V[1]], 'axis-y');

for (let u = U[0]; u <= 9; u += 0.5) {
    addLabel(project(u, V[0]), Math.abs(u), '.87 -.5 .87 .5', u % 1 ? 3 : -1);
}
for (let v = 2; v <= V[1]; v += 0.5) {
    addLabel(project(U[1], v), v, '.87 .5 -.87 .5', v % 1 ? 4 : 2);
}
```
